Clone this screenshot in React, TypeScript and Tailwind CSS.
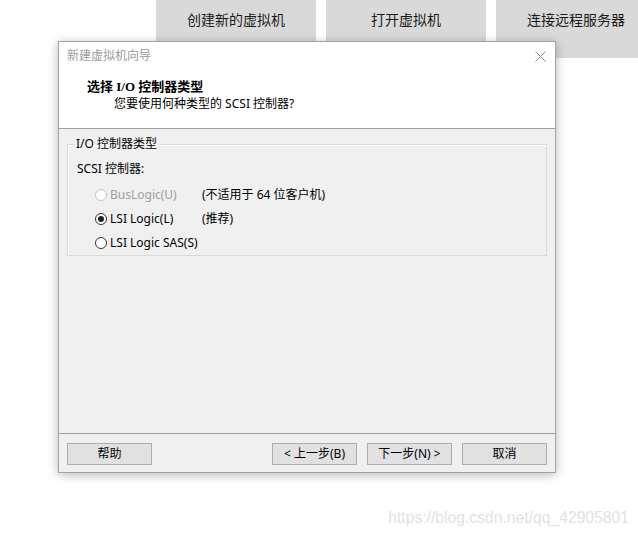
const ui = { fontFamily: '"Noto Sans", "Noto Sans CJK SC", sans-serif' }
const heading = { fontFamily: '"Liberation Serif", "Noto Sans CJK SC", serif' }

function Radio({ checked, disabled }: { checked?: boolean; disabled?: boolean }) {
  return (
    <span
      className={
        "flex h-[12px] w-[12px] shrink-0 items-center justify-center rounded-full border bg-white " +
        (disabled ? "border-[#c4c4c4] bg-[#f4f4f4]" : "border-[#333333]")
      }
    >
      {checked && <span className="h-[6px] w-[6px] rounded-full bg-[#222222]" />}
    </span>
  )
}

function WizardButton({ children }: { children: React.ReactNode }) {
  return (
    <button className="flex h-[22px] w-[85px] items-center justify-center border border-[#adadad] bg-[#e1e1e1] text-[12px] leading-[16px] text-black">
      {children}
    </button>
  )
}

const options = [
  { label: "BusLogic(U)", note: "(不适用于 64 位客户机)", disabled: true },
  { label: "LSI Logic(L)", note: "(推荐)", checked: true },
  { label: "LSI Logic SAS(S)" },
]

export default function App() {
  return (
    <div className="relative h-[537px] w-[638px] overflow-hidden bg-white" style={ui}>
      {/* launcher buttons behind the wizard */}
      <div className="flex gap-[10px] pl-[156px]">
        {["创建新的虚拟机", "打开虚拟机", "连接远程服务器"].map((t) => (
          <div
            key={t}
            className="h-[58px] w-[160px] shrink-0 bg-[#d9d9d9] pt-[10px] text-center text-[14px] leading-[20px] text-[#1a1a1a]"
          >
            {t}
          </div>
        ))}
      </div>

      {/* wizard window */}
      <div className="absolute left-[58px] top-[41px] flex h-[432px] w-[498px] flex-col border border-[#a3a3a3] bg-[#f0f0f0] shadow-[0_2px_10px_rgba(0,0,0,0.28)]">
        <div className="h-[87px] shrink-0 border-b border-[#a0a0a0] bg-white">
          <div className="flex items-center justify-between pl-[8px] pr-[9px] pt-[6px]">
            <span className="text-[12px] leading-[16px] text-[#9a9a9a]">新建虚拟机向导</span>
            <svg width="11" height="11" viewBox="0 0 11 11" className="text-[#8a8a8a]">
              <path d="M0.5 0.5 L10.5 10.5 M10.5 0.5 L0.5 10.5" stroke="currentColor" strokeWidth="1" fill="none" />
            </svg>
          </div>
          <div className="mt-[14px] pl-[28px] text-[13px] font-bold leading-[18px] text-black" style={heading}>
            选择 I/O 控制器类型
          </div>
          <div className="pl-[55px] text-[12px] leading-[16px] text-black">您要使用何种类型的 SCSI 控制器?</div>
        </div>

        <div className="h-[305px] shrink-0 border-b border-[#a0a0a0] pt-[7px]">
          <fieldset className="mx-[8px] border border-[#d9d9d9] shadow-[inset_1px_1px_0_#ffffff]">
            <legend className="ml-[6px] px-[2px] text-[12px] leading-[16px] text-black">I/O 控制器类型</legend>
            <div className="px-[9px] pt-[9px]">
              <div className="text-[12px] leading-[16px] text-black">SCSI 控制器:</div>
              <div className="mt-[6px] flex flex-col">
                {options.map((o) => (
                  <div key={o.label} className="flex h-[24px] items-center pl-[18px] text-[12px]">
                    <Radio checked={o.checked} disabled={o.disabled} />
                    <span className={"ml-[3px] w-[92px] " + (o.disabled ? "text-[#a0a0a0]" : "text-black")}>
                      {o.label}
                    </span>
                    {o.note && <span className="text-black">{o.note}</span>}
                  </div>
                ))}
              </div>
            </div>
          </fieldset>
        </div>

        <div className="flex flex-1 items-start px-[8px] pt-[9px]">
          <WizardButton>帮助</WizardButton>
          <div className="ml-auto flex gap-[10px]">
            <WizardButton>&lt; 上一步(B)</WizardButton>
            <WizardButton>下一步(N) &gt;</WizardButton>
            <WizardButton>取消</WizardButton>
          </div>
        </div>
      </div>

      <div
        className="absolute bottom-[9px] right-[9px] text-[15.7px] leading-[20px] text-[#e2e2e2]"
        style={{ fontFamily: '"Liberation Sans", Arial, sans-serif' }}
      >
        https://blog.csdn.net/qq_42905801
      </div>
    </div>
  )
}
